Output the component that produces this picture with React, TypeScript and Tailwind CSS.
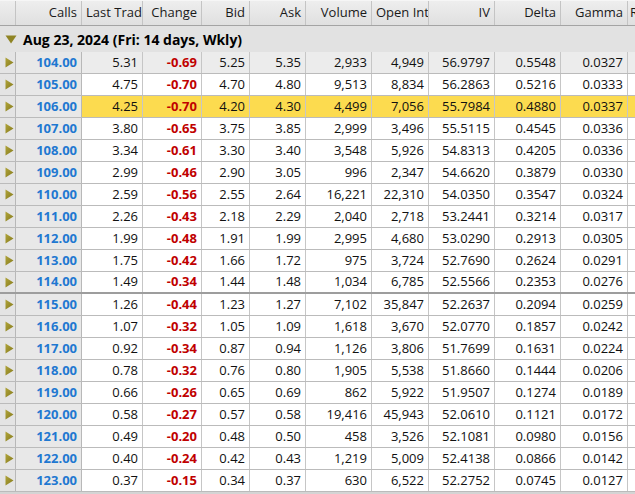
import React from "react";

type Row = [string, string, string, string, string, string, string, string, string, string];

const rows: Row[] = [
  ["104.00", "5.31", "-0.69", "5.25", "5.35", "2,933", "4,949", "56.9797", "0.5548", "0.0327"],
  ["105.00", "4.75", "-0.70", "4.70", "4.80", "9,513", "8,834", "56.2863", "0.5216", "0.0333"],
  ["106.00", "4.25", "-0.70", "4.20", "4.30", "4,499", "7,056", "55.7984", "0.4880", "0.0337"],
  ["107.00", "3.80", "-0.65", "3.75", "3.85", "2,999", "3,496", "55.5115", "0.4545", "0.0336"],
  ["108.00", "3.34", "-0.61", "3.30", "3.40", "3,548", "5,926", "54.8313", "0.4205", "0.0336"],
  ["109.00", "2.99", "-0.46", "2.90", "3.05", "996", "2,347", "54.6620", "0.3879", "0.0330"],
  ["110.00", "2.59", "-0.56", "2.55", "2.64", "16,221", "22,310", "54.0350", "0.3547", "0.0324"],
  ["111.00", "2.26", "-0.43", "2.18", "2.29", "2,040", "2,718", "53.2441", "0.3214", "0.0317"],
  ["112.00", "1.99", "-0.48", "1.91", "1.99", "2,995", "4,680", "53.0290", "0.2913", "0.0305"],
  ["113.00", "1.75", "-0.42", "1.66", "1.72", "975", "3,724", "52.7690", "0.2624", "0.0291"],
  ["114.00", "1.49", "-0.34", "1.44", "1.48", "1,034", "6,785", "52.5566", "0.2353", "0.0276"],
  ["115.00", "1.26", "-0.44", "1.23", "1.27", "7,102", "35,847", "52.2637", "0.2094", "0.0259"],
  ["116.00", "1.07", "-0.32", "1.05", "1.09", "1,618", "3,670", "52.0770", "0.1857", "0.0242"],
  ["117.00", "0.92", "-0.34", "0.87", "0.94", "1,126", "3,806", "51.7699", "0.1631", "0.0224"],
  ["118.00", "0.78", "-0.32", "0.76", "0.80", "1,905", "5,538", "51.8660", "0.1444", "0.0206"],
  ["119.00", "0.66", "-0.26", "0.65", "0.69", "862", "5,922", "51.9507", "0.1274", "0.0189"],
  ["120.00", "0.58", "-0.27", "0.57", "0.58", "19,416", "45,943", "52.0610", "0.1121", "0.0172"],
  ["121.00", "0.49", "-0.20", "0.48", "0.50", "458", "3,526", "52.1081", "0.0980", "0.0156"],
  ["122.00", "0.40", "-0.24", "0.42", "0.43", "1,219", "5,009", "52.4138", "0.0866", "0.0142"],
  ["123.00", "0.37", "-0.15", "0.34", "0.37", "630", "6,522", "52.2752", "0.0745", "0.0127"],
];

const headers = ["Calls", "Last Trade", "Change", "Bid", "Ask", "Volume", "Open Interest", "IV", "Delta", "Gamma"];

const cols = "grid grid-cols-[16px_66px_61px_59px_48px_56px_66px_57px_66px_66px_67px_1fr]";

function RightArrow() {
  return (
    <svg width="9" height="11" viewBox="0 0 9 11">
      <defs>
        <linearGradient id="ra" x1="0" y1="0" x2="1" y2="1">
          <stop offset="0" stopColor="#b0a43a" />
          <stop offset="1" stopColor="#857a1c" />
        </linearGradient>
      </defs>
      <path d="M0.5 0.5 L8.5 5.5 L0.5 10.5 Z" fill="url(#ra)" />
    </svg>
  );
}

function DownArrow() {
  return (
    <svg width="12" height="9" viewBox="0 0 12 9">
      <path d="M0.5 0.5 L11.5 0.5 L6 8.5 Z" fill="#8f8424" />
    </svg>
  );
}

export default function App() {
  return (
    <div className="w-[635px] h-[494px] overflow-hidden bg-[#d4d4d4] font-['Open_Sans',sans-serif] text-[13px] text-[#111]">
      {/* Column headers */}
      <div className={`${cols} h-[26px] bg-gradient-to-b from-[#eeeeee] to-[#e0e0e0] border-t border-[#f6f6f6] border-b border-b-[#a4a4a4]`}>
        <div className="border-r border-[#c4c4c4]" />
        {headers.map((h) => (
          <div
            key={h}
            className={`flex items-center overflow-hidden whitespace-nowrap border-r border-[#c4c4c4] px-1 text-[#1a1a1a] ${
              h === "Last Trade" || h === "Open Interest" ? "justify-start" : "justify-end"
            }`}
          >
            {h}
          </div>
        ))}
        <div className="flex items-center overflow-hidden whitespace-nowrap pl-[2px] text-[#1a1a1a]">Rho</div>
      </div>

      {/* Expiration group */}
      <div className="flex h-[26px] items-center gap-[6px] bg-[#e2e2e2] pl-[5px]">
        <DownArrow />
        <span className="text-[14px] font-bold text-black">Aug 23, 2024 (Fri: 14 days, Wkly)</span>
      </div>

      {/* Strike rows */}
      {rows.map((r, i) => {
        const rowBg = i === 0 ? "bg-[#ececec]" : i === 2 ? "bg-[#fcdb4f]" : "bg-white";
        const line = i === 10 ? "border-b-2 border-b-[#9d9d9d]" : "border-b border-b-[#bbbbbb]";
        return (
          <div key={r[0]} className={`${cols} h-[22px] ${line}`}>
            <div className="flex items-center justify-start border-r border-[#b8b8b8] bg-[#e4e4e4] pl-[5px]">
              <RightArrow />
            </div>
            <div className="flex items-center justify-end border-r border-[#b8b8b8] bg-[#e8e8e8] pr-1 font-bold text-[#1f78d1]">
              {r[0]}
            </div>
            {r.slice(1).map((v, j) => (
              <div
                key={j}
                className={`flex items-center justify-end border-r border-[#c6c6c6] pr-1 ${rowBg} ${
                  j === 1 ? "font-bold text-[#c00000]" : ""
                }`}
              >
                {v}
              </div>
            ))}
            <div className={rowBg} />
          </div>
        );
      })}
    </div>
  );
}
